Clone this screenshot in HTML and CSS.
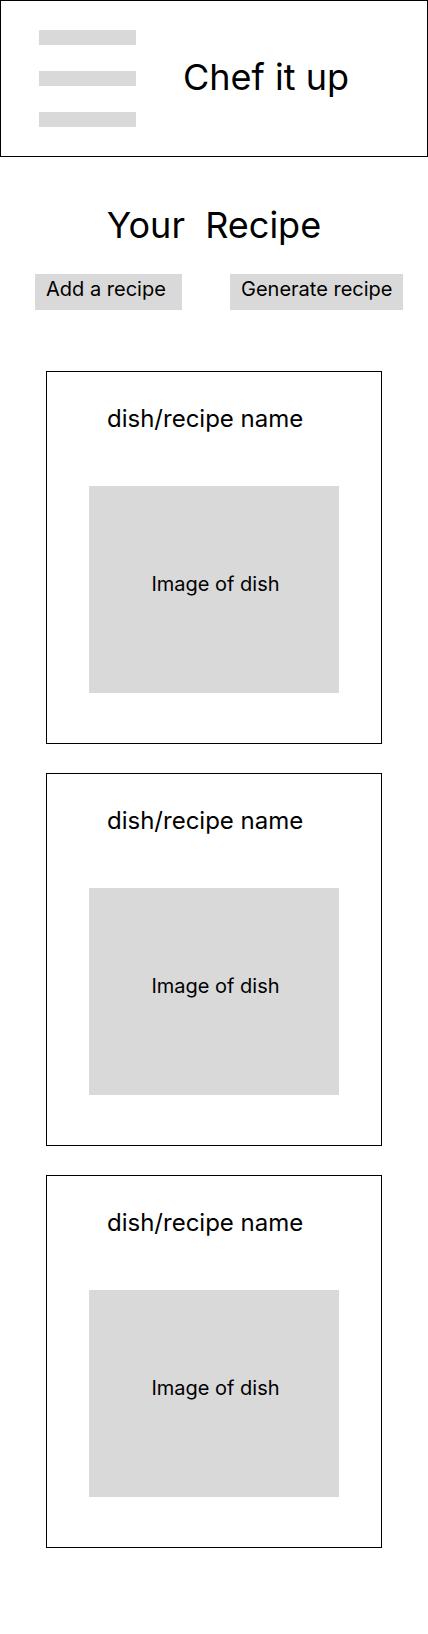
FILE: index.html
```html
<!DOCTYPE html>
<html lang="en">
<head>
    <meta charset="UTF-8">
    <meta name="viewport" content="width=device-width, initial-scale=1.0">
    <title>Chef it up</title>
    <link rel="stylesheet" href="styles.css">
</head>
<body>
    <header class="topbar">
        <div class="menu">
            <span class="bar"></span>
            <span class="bar"></span>
            <span class="bar"></span>
        </div>
        <span class="brand">Chef it up</span>
    </header>

    <main>
        <h1 class="page-title">Your&nbsp; Recipe</h1>

        <div class="actions">
            <button class="add">Add a recipe</button>
            <button class="generate">Generate recipe</button>
        </div>

        <div class="recipes">
            <div class="card">
                <h2 class="card-title">dish/recipe name</h2>
                <div class="dish-img">Image of dish</div>
            </div>
            <div class="card">
                <h2 class="card-title">dish/recipe name</h2>
                <div class="dish-img">Image of dish</div>
            </div>
            <div class="card">
                <h2 class="card-title">dish/recipe name</h2>
                <div class="dish-img">Image of dish</div>
            </div>
        </div>
    </main>
</body>
</html>
```

FILE: styles.css
```css
body {
    margin: 0;
    font-family: 'Inter', 'Noto Sans', sans-serif;
    color: #000;
    background: #fff;
}

.topbar {
    height: 157px;
    box-sizing: border-box;
    border: 1px solid #000;
    display: flex;
    align-items: center;
    padding-left: 38px;
}
.menu { display: flex; flex-direction: column; gap: 26px; }
.bar { display: block; width: 97px; height: 15px; background: #d9d9d9; }
.brand { margin: 0 0 3px 47px; font-size: 36px; line-height: 44px; }

.page-title {
    margin: 46px 0 0;
    font-size: 36px;
    font-weight: normal;
    line-height: 44px;
    text-align: center;
}

.actions {
    display: flex;
    gap: 48px;
    padding-left: 35px;
    margin-top: 27px;
}
.actions button {
    height: 36px;
    border: none;
    background: #d9d9d9;
    font-family: inherit;
    font-size: 20px;
    line-height: 24px;
    color: #000;
    text-align: left;
    padding: 3px 0 0 11px;
    display: flex;
    align-items: flex-start;
}
.add { width: 147px; }
.generate { width: 173px; }

.recipes {
    display: flex;
    flex-direction: column;
    gap: 29px;
    margin-top: 61px;
    padding-left: 46px;
    padding-bottom: 40px;
}
.card {
    width: 336px;
    height: 373px;
    box-sizing: border-box;
    border: 1px solid #000;
    padding: 32px 0 0 42px;
}
.card-title {
    margin: 0 0 0 18px;
    font-size: 24px;
    font-weight: normal;
    line-height: 29px;
}
.dish-img {
    width: 250px;
    height: 207px;
    margin-top: 53px;
    box-sizing: border-box;
    padding: 86px 0 0 3px;
    background: #d9d9d9;
    font-size: 20px;
    line-height: 24px;
    text-align: center;
}
```
